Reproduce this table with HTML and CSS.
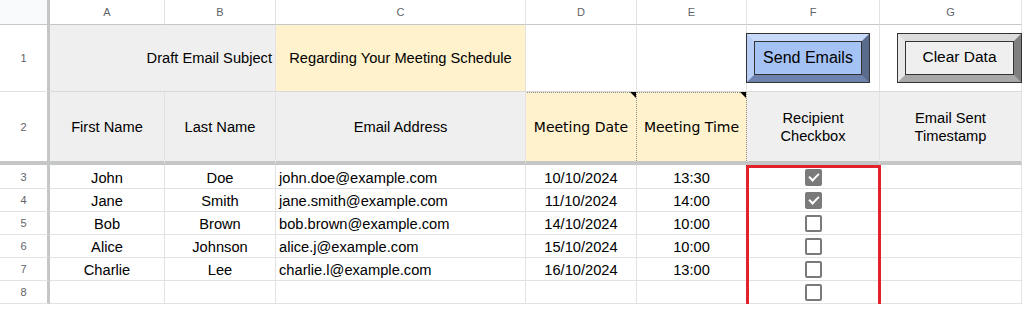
FILE: index.html
```html
<!DOCTYPE html>
<html>
<head>
    <title>Email Scheduler Sheet</title>
    <link rel="stylesheet" href="styles.css">
</head>
<body>
    <div class="sheet">
        <!-- column letters -->
        <div class="cell corner"></div>
        <div class="cell col-head">A</div>
        <div class="cell col-head">B</div>
        <div class="cell col-head">C</div>
        <div class="cell col-head">D</div>
        <div class="cell col-head">E</div>
        <div class="cell col-head">F</div>
        <div class="cell col-head">G</div>

        <!-- row 1 -->
        <div class="cell row-num">1</div>
        <div class="cell tall grey right span2">Draft Email Subject</div>
        <div class="cell tall yellow center">Regarding Your Meeting Schedule</div>
        <div class="cell tall"></div>
        <div class="cell tall"></div>
        <div class="cell tall"></div>
        <div class="cell tall"></div>

        <!-- row 2 -->
        <div class="cell row-num frozen">2</div>
        <div class="cell frozen grey center">First Name</div>
        <div class="cell frozen grey center">Last Name</div>
        <div class="cell frozen grey center">Email Address</div>
        <div class="cell frozen yellow center note">Meeting Date</div>
        <div class="cell frozen yellow center note">Meeting Time</div>
        <div class="cell frozen grey center two-line">Recipient<br>Checkbox</div>
        <div class="cell frozen grey center two-line">Email Sent<br>Timestamp</div>

        <!-- data -->
        <div class="row">
            <div class="cell row-num">3</div>
            <div class="cell center">John</div>
            <div class="cell center">Doe</div>
            <div class="cell left">john.doe@example.com</div>
            <div class="cell center">10/10/2024</div>
            <div class="cell center">13:30</div>
            <div class="cell center"><span class="check on"></span></div>
            <div class="cell"></div>
        </div>
        <div class="row">
            <div class="cell row-num">4</div>
            <div class="cell center">Jane</div>
            <div class="cell center">Smith</div>
            <div class="cell left">jane.smith@example.com</div>
            <div class="cell center">11/10/2024</div>
            <div class="cell center">14:00</div>
            <div class="cell center"><span class="check on"></span></div>
            <div class="cell"></div>
        </div>
        <div class="row">
            <div class="cell row-num">5</div>
            <div class="cell center">Bob</div>
            <div class="cell center">Brown</div>
            <div class="cell left">bob.brown@example.com</div>
            <div class="cell center">14/10/2024</div>
            <div class="cell center">10:00</div>
            <div class="cell center"><span class="check"></span></div>
            <div class="cell"></div>
        </div>
        <div class="row">
            <div class="cell row-num">6</div>
            <div class="cell center">Alice</div>
            <div class="cell center">Johnson</div>
            <div class="cell left">alice.j@example.com</div>
            <div class="cell center">15/10/2024</div>
            <div class="cell center">10:00</div>
            <div class="cell center"><span class="check"></span></div>
            <div class="cell"></div>
        </div>
        <div class="row">
            <div class="cell row-num">7</div>
            <div class="cell center">Charlie</div>
            <div class="cell center">Lee</div>
            <div class="cell left">charlie.l@example.com</div>
            <div class="cell center">16/10/2024</div>
            <div class="cell center">13:00</div>
            <div class="cell center"><span class="check"></span></div>
            <div class="cell"></div>
        </div>
        <div class="row">
            <div class="cell row-num">8</div>
            <div class="cell"></div>
            <div class="cell"></div>
            <div class="cell"></div>
            <div class="cell"></div>
            <div class="cell"></div>
            <div class="cell center"><span class="check"></span></div>
            <div class="cell"></div>
        </div>

        <!-- drawings floating over the grid -->
        <div class="btn btn-send"><div class="btn-face">Send Emails</div></div>
        <div class="btn btn-clear"><div class="btn-face">Clear Data</div></div>
        <div class="highlight"></div>
    </div>
</body>
</html>
```

FILE: styles.css
```css
body {
    margin: 0;
    background: #fff;
    font-family: "Liberation Sans", Arial, sans-serif;
    font-size: 14.67px;
    color: #000;
    overflow: hidden;
}
.sheet {
    position: relative;
    display: grid;
    grid-template-columns: 50px 115px 111px 250px 111px 110px 133px 142px;
    grid-template-rows: 25px 67px 73px 24px 23px 23px 23px 23px 23px;
    width: 1022px;
}
.row {
    display: contents;
}
.cell {
    box-sizing: border-box;
    border-right: 1px solid #e2e2e2;
    border-bottom: 1px solid #e2e2e2;
    display: flex;
    align-items: center;
    white-space: nowrap;
    overflow: hidden;
}
.row .cell {
    padding-top: 2px;
}
.corner {
    background: #f8f9fa;
    border-right: 3px solid #c4c7c5;
    border-bottom: 1px solid #c4c7c5;
}
.col-head {
    justify-content: center;
    font-size: 11px;
    color: #5f6368;
    border-bottom: 1px solid #c4c7c5;
}
.row-num {
    justify-content: center;
    font-size: 11px;
    color: #5f6368;
    border-right: 3px solid #c4c7c5;
}
.row .row-num {
    padding-top: 0;
}
.tall {
    border-bottom-color: #d9d9d9;
}
.frozen {
    border-bottom: 4px solid #c4c7c5;
}
.span2 {
    grid-column: span 2;
}
.grey {
    background: #efefef;
}
.yellow {
    background: #fff2cc;
}
.center {
    justify-content: center;
    text-align: center;
}
.right {
    justify-content: flex-end;
    padding-right: 3px;
}
.left {
    padding-left: 3px;
}
.two-line {
    line-height: 18px;
}
.note {
    position: relative;
    font-family: "DejaVu Sans", Verdana, sans-serif;
    font-size: 14px;
    border-right: 1px dotted #8a8a8a;
}
.note::before {
    content: "";
    position: absolute;
    left: -1px;
    top: 0;
    bottom: 0;
    right: 0;
    border-top: 1px dotted #8a8a8a;
    border-left: 1px dotted #8a8a8a;
}
.note::after {
    content: "";
    position: absolute;
    top: 0;
    right: 0;
    border-top: 6px solid #000;
    border-left: 6px solid transparent;
}
.check {
    box-sizing: border-box;
    width: 17px;
    height: 17px;
    border: 2px solid #7a7a7a;
    border-radius: 2px;
    position: relative;
    margin-top: -1px;
}
.check.on {
    background: #7a7a7a;
}
.check.on::after {
    content: "";
    position: absolute;
    left: 4px;
    top: 0;
    width: 4px;
    height: 8px;
    border-right: 2px solid #fff;
    border-bottom: 2px solid #fff;
    transform: rotate(45deg);
}

/* drawings */
.btn {
    position: absolute;
    top: 33px;
    height: 50px;
    box-sizing: border-box;
    border: 1px solid #333;
}
.btn-face {
    box-sizing: border-box;
    height: 100%;
    border: 7px solid;
    box-shadow: inset 0 0 0 1px #333;
    display: flex;
    align-items: center;
    justify-content: center;
    font-size: 16px;
}
.btn-send {
    left: 746px;
    width: 124px;
}
.btn-send .btn-face {
    background: #a4c2f4;
    border-color: #c9daf8 #5a6b8c #6d82ad #b7cdf3;
}
.btn-clear {
    left: 897px;
    width: 125px;
}
.btn-clear .btn-face {
    background: #efefef;
    border-color: #dcdcdc #7f7f7f #a8a8a8 #e8e8e8;
    font-size: 15.5px;
    padding-bottom: 3px;
}
.highlight {
    position: absolute;
    left: 746px;
    top: 165px;
    width: 135px;
    height: 143px;
    box-sizing: border-box;
    border: 3px solid #e3212a;
}
```
